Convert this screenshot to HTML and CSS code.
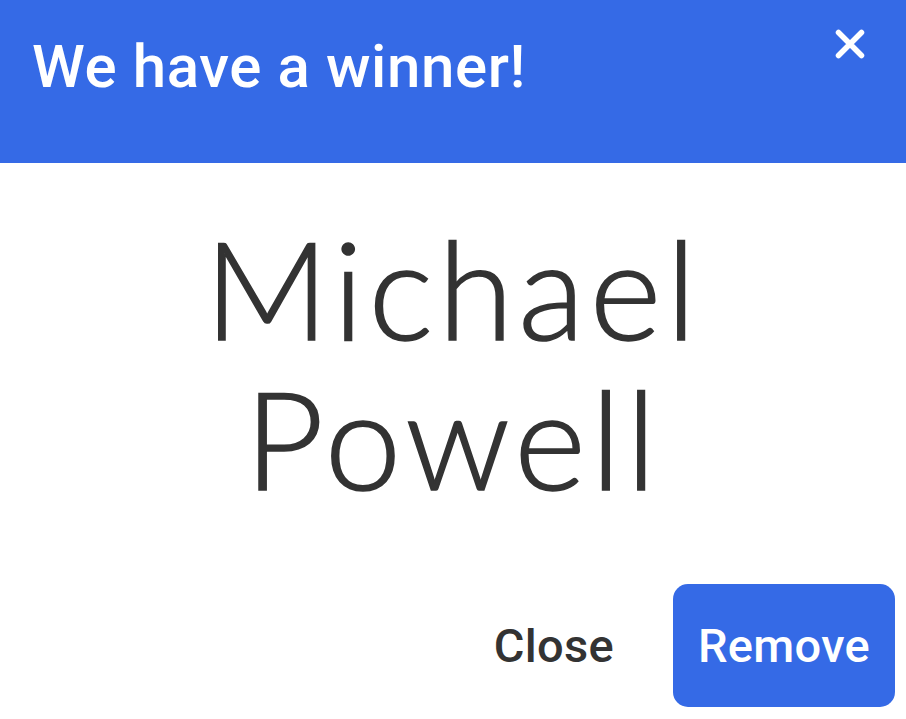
FILE: index.html
```html
<!DOCTYPE html>
<html lang="en">
<head>
<meta charset="utf-8">
<title>We have a winner!</title>
<link rel="stylesheet" href="styles.css">
</head>
<body>
<div class="modal">
  <header class="modal-header">
    <h1 class="modal-title">We have a winner!</h1>
    <button class="icon-close" aria-label="Close">
      <svg width="30" height="30" viewBox="0 0 30 30"><path d="M3.5 3.5 L26.5 26.5 M26.5 3.5 L3.5 26.5" stroke="#fff" stroke-width="5.5" stroke-linecap="round" fill="none"/></svg>
    </button>
  </header>
  <main class="modal-body">
    <div class="winner-name">Michael<br>Powell</div>
  </main>
  <footer class="modal-footer">
    <button class="btn btn-text">Close</button>
    <button class="btn btn-primary">Remove</button>
  </footer>
</div>
</body>
</html>
```
FILE: styles.css
```css
html, body {
  margin: 0;
  padding: 0;
  background: #ffffff;
}
.modal {
  width: 906px;
  height: 719px;
  display: flex;
  flex-direction: column;
  font-family: Roboto, "Liberation Sans", sans-serif;
}
.modal-header {
  height: 163px;
  background: #356ae6;
  display: flex;
  justify-content: space-between;
  align-items: flex-start;
  padding: 0 41px 0 32px;
  box-sizing: border-box;
}
.modal-title {
  margin: 37px 0 0 0;
  font-size: 60px;
  line-height: 1;
  font-weight: 500;
  letter-spacing: 0.6px;
  color: #ffffff;
}
.icon-close {
  margin-top: 29px;
  padding: 0;
  border: 0;
  background: none;
  width: 30px;
  height: 30px;
  display: block;
}
.icon-close svg {
  display: block;
}
.modal-body {
  padding-top: 49px;
  display: flex;
  justify-content: center;
}
.winner-name {
  font-family: Lato, "Open Sans", sans-serif;
  font-weight: 300;
  font-size: 137px;
  line-height: 150px;
  color: #333333;
  -webkit-text-stroke: 1.6px #333333;
  text-align: center;
  letter-spacing: 5px;
}
.modal-footer {
  margin-top: auto;
  display: flex;
  justify-content: flex-end;
  align-items: center;
  gap: 34px;
  padding: 0 11px 12px 0;
}
.btn {
  font-family: Roboto, "Liberation Sans", sans-serif;
  font-size: 47px;
  font-weight: 500;
  letter-spacing: 0.3px;
  line-height: 1;
  height: 123px;
  padding: 0 25px;
  border: 0;
  border-radius: 15px;
  display: flex;
  align-items: center;
  justify-content: center;
  cursor: pointer;
}
.btn-text {
  background: transparent;
  color: #333333;
}
.btn-primary {
  background: #356ae6;
  color: #ffffff;
}
```
